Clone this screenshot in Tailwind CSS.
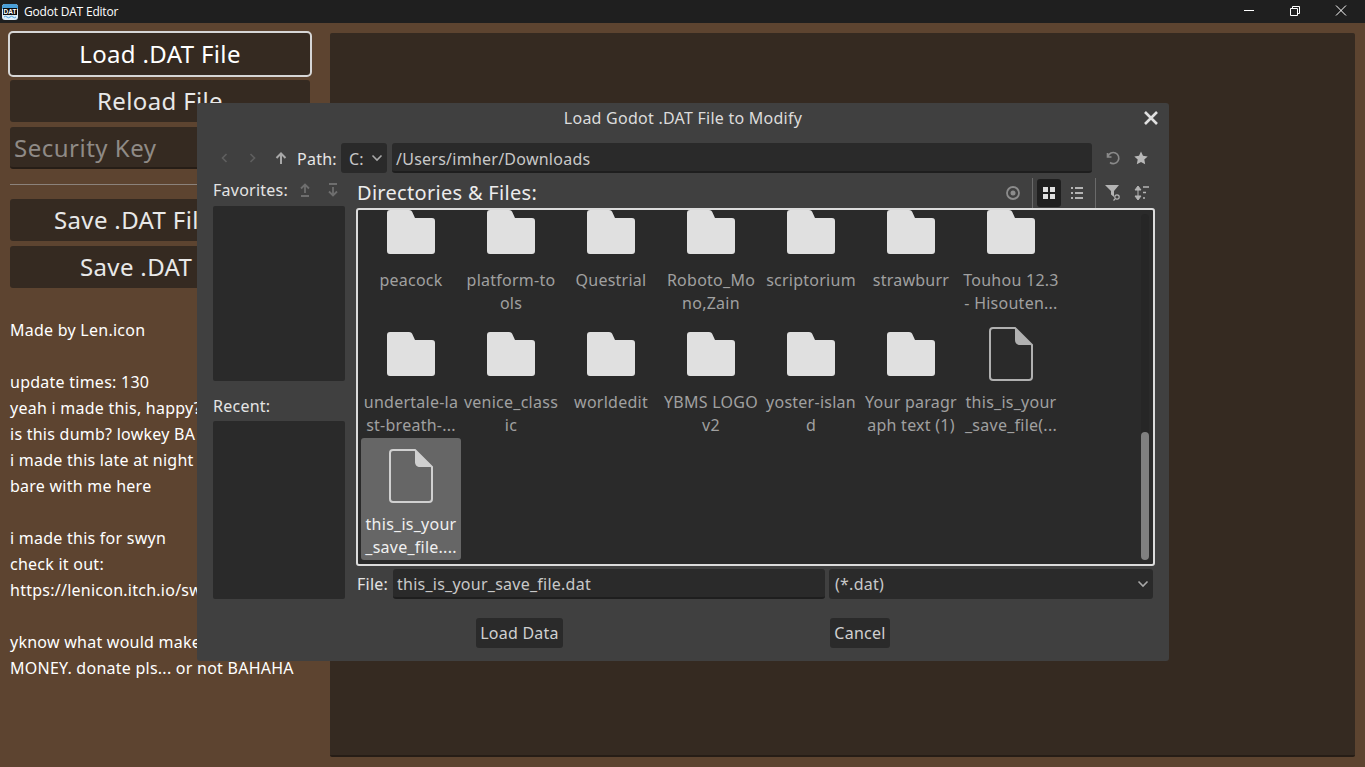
<!DOCTYPE html>
<html lang="en">
<head>
    <meta charset="UTF-8">
    <title>Godot DAT Editor</title>
    <script src="https://cdn.jsdelivr.net/npm/@tailwindcss/browser@4"></script>
</head>
<body class="bg-[#5d4430] font-['Noto_Sans',sans-serif] overflow-hidden">
<div class="relative w-[1365px] h-[767px] overflow-hidden">
    <!-- title bar -->
    <div class="h-[23px] bg-[#1f1f1f] flex items-center text-white">
        <svg class="ml-[2px] w-[16px] h-[16px]" viewBox="0 0 16 16">
            <rect x="0" y="0" width="16" height="16" rx="3" fill="#dcecf7"/>
            <path d="M2 0h12l2 2v3H0V2z" fill="#4a9fd8"/>
            <rect x="1" y="4" width="14" height="7" fill="#0b0b0b"/>
            <path d="M2 13q1.500-1.500 3 0t3 0 3 0 3 0" stroke="#4a9fd8" fill="none"/>
            <text x="8" y="10" font-size="6.5" font-weight="700" text-anchor="middle" fill="#fff" font-family="Liberation Sans">DAT</text>
        </svg>
        <span class="ml-[6px] text-[12px] tracking-[-0.2px] font-['Open_Sans',sans-serif]">Godot DAT Editor</span>
        <div class="ml-auto flex items-center pr-[1px]">
            <svg class="w-[46px] h-[23px]" viewBox="0 0 46 23"><path d="M18 10.500h10" stroke="#fff" fill="none"/></svg>
            <svg class="w-[46px] h-[23px]" viewBox="0 0 46 23"><path d="M18.500 8.500h7v7h-7zM20.500 8.500v-2h7v7h-2" stroke="#fff" fill="none"/></svg>
            <svg class="w-[46px] h-[23px]" viewBox="0 0 46 23"><path d="M18 5.500l10 10M28 5.500l-10 10" stroke="#fff" fill="none"/></svg>
        </div>
    </div>

    <!-- main -->
    <div class="flex pt-[10px] pl-[10px] pr-[10px] gap-[20px] h-[734px]">
        <div class="w-[300px] flex flex-col text-[#e8e8e8]">
            <div class="h-[42px] rounded-[3px] bg-[#352a21] text-white text-[24px] tracking-[0.35px] flex items-center justify-center outline-2 outline-[#d6d6d6]">Load .DAT File</div>
            <div class="h-[42px] mt-[5px] rounded-[3px] bg-[#352a21] text-[24px] tracking-[0.35px] flex items-center justify-center">Reload File</div>
            <div class="h-[42px] mt-[5px] rounded-[3px] bg-[#352a21] border-b-2 border-[#261d16] text-[24px] tracking-[0.5px] text-[#8f8a86] flex items-center pl-[4px] pt-[2px]">Security Key</div>
            <div class="h-px bg-[#8b827b] mt-[15px]"></div>
            <div class="h-[42px] mt-[14px] rounded-[3px] bg-[#352a21] text-[24px] tracking-[0.35px] flex items-center pl-[44px]">Save .DAT File</div>
            <div class="h-[42px] mt-[5px] rounded-[3px] bg-[#352a21] text-[24px] tracking-[0.35px] flex items-center pl-[70px]">Save .DAT</div>
            <div class="mt-[29px] text-[16px] leading-[26px] tracking-[0.25px] text-white whitespace-nowrap">
                <p>Made by Len.icon</p>
                <p class="h-[26px]"></p>
                <p>update times: 130</p>
                <p>yeah i made this, happy?</p>
                <p>is this dumb? lowkey BA</p>
                <p>i made this late at night</p>
                <p>bare with me here</p>
                <p class="h-[26px]"></p>
                <p>i made this for swyn</p>
                <p>check it out:</p>
                <p>https://lenicon.itch.io/swyn</p>
                <p class="h-[26px]"></p>
                <p>yknow what would make</p>
                <p>MONEY. donate pls... or not BAHAHA</p>
            </div>
        </div>
        <div class="flex-1 h-[724px] rounded-[2px] bg-[#352a21] border-b-2 border-[#261d16]"></div>
    </div>

    <!-- file dialog -->
    <div class="absolute left-[197px] top-[103px] w-[972px] h-[558px] rounded-[3px] bg-[#404040] flex flex-col pt-[3px] px-[16px] text-[#e4e4e4] text-[16px] tracking-[0.25px]">
        <div class="relative h-[24px] flex items-center justify-center text-[#dcdcdc]">
            Load Godot .DAT File to Modify
            <svg class="absolute right-[-6px] top-[4px] w-[16px] h-[16px]" viewBox="0 0 16 16"><path d="M2 2l12 12M14 2L2 14" stroke="#e0e0e0" stroke-width="2.600" fill="none"/></svg>
        </div>
        <!-- path row -->
        <div class="mt-[13px] h-[30px] flex items-center">
            <svg class="w-[22px] h-[16px]" viewBox="0 0 22 16"><path d="M13.500 4l-4 4 4 4" stroke="#5f5f5f" stroke-width="1.600" fill="none"/></svg>
            <svg class="ml-[6px] w-[22px] h-[16px]" viewBox="0 0 22 16"><path d="M9.500 4l4 4-4 4" stroke="#5f5f5f" stroke-width="1.600" fill="none"/></svg>
            <svg class="ml-[10px] w-[16px] h-[16px]" viewBox="0 0 16 16"><path d="M8 14V4M3.500 8L8 3.500 12.500 8" stroke="#a8a8a8" stroke-width="2" fill="none"/></svg>
            <span class="ml-[8px] w-[40px] pt-[1px] text-[#e6e6e6]">Path:</span>
            <div class="ml-[4px] w-[46px] h-[30px] rounded-[3px] bg-[#2a2a2a] flex items-center pl-[8px] pt-[2px] text-[#c8c8c8]">C:
                <svg class="ml-[7px] -mt-[2px] w-[12px] h-[12px]" viewBox="0 0 12 12"><path d="M1.500 3.500L6 8l4.500-4.500" stroke="#a8a8a8" stroke-width="1.600" fill="none"/></svg>
            </div>
            <div class="ml-[5px] w-[700px] h-[30px] rounded-[3px] bg-[#2a2a2a] border-b-2 border-[#1e1e1e] flex items-center pl-[4px] pt-[4px] text-[#c8c8c8]">/Users/imher/Downloads</div>
            <svg class="ml-[13px] w-[16px] h-[16px]" viewBox="0 0 16 16"><path d="M5 12.500A5.500 5.500 0 1 0 3 6.500M2.500 3v4h4" stroke="#8a8a8a" stroke-width="1.600" fill="none"/></svg>
            <svg class="ml-[12px] w-[16px] h-[16px]" viewBox="0 0 16 16"><path d="M8 1.500l2 4.300 4.700.6-3.400 3.200.9 4.700L8 12l-4.200 2.300.9-4.700L1.300 6.400 6 5.800z" fill="#b8b8b8"/></svg>
        </div>
        <!-- body -->
        <div class="mt-[4px] flex gap-[12px]">
            <div class="w-[132px] shrink-0 flex flex-col">
                <div class="h-[29px] pb-[3px] flex items-center">
                    <span class="w-[76px] whitespace-nowrap">Favorites:</span>
                    <svg class="ml-[8px] w-[16px] h-[16px]" viewBox="0 0 16 16"><path d="M8 11V3M4 6.500L8 2.500l4 4M4 14h8" stroke="#6e6e6e" stroke-width="1.800" fill="none"/></svg>
                    <svg class="ml-[12px] w-[16px] h-[16px]" viewBox="0 0 16 16"><path d="M8 5v8M4 9.500l4 4 4-4M4 2h8" stroke="#6e6e6e" stroke-width="1.800" fill="none"/></svg>
                </div>
                <div class="h-[175px] rounded-[2px] bg-[#2a2a2a]"></div>
                <div class="h-[40px] flex items-center pt-[10px]">Recent:</div>
                <div class="h-[178px] rounded-[2px] bg-[#2a2a2a]"></div>
            </div>
            <div class="w-[797px] shrink-0 flex flex-col">
                <div class="h-[31px] flex items-center">
                    <span class="text-[20px] tracking-[0.3px] text-[#ececec]">Directories &amp; Files:</span>
                    <div class="ml-auto flex items-center h-[30px] pr-[5px]">
                        <svg class="w-[16px] h-[16px]" viewBox="0 0 16 16"><circle cx="8" cy="8" r="6" stroke="#8c8c8c" stroke-width="1.800" fill="none"/><circle cx="8" cy="8" r="2.500" fill="#8c8c8c"/></svg>
                        <div class="ml-[11px] w-px h-[30px] bg-[#6a6a6a]"></div>
                        <div class="ml-[4px] w-[24px] h-[28px] rounded-[3px] bg-[#1f1f1f] flex items-center justify-center">
                            <svg class="w-[12px] h-[12px]" viewBox="0 0 12 12"><path d="M0 0h5v5H0zM7 0h5v5H7zM0 7h5v5H0zM7 7h5v5H7z" fill="#e0e0e0"/></svg>
                        </div>
                        <svg class="ml-[9px] w-[14px] h-[14px]" viewBox="0 0 14 14"><path d="M1 1h2v2H1zM5 1h8v2H5zM1 6h2v2H1zM5 6h8v2H5zM1 11h2v2H1zM5 11h8v2H5z" fill="#b4b4b4"/></svg>
                        <div class="ml-[11px] w-px h-[30px] bg-[#6a6a6a]"></div>
                        <svg class="ml-[9px] w-[16px] h-[16px]" viewBox="0 0 16 16"><path d="M0 0h14L9 6v6L6 9.500V6z" fill="#b4b4b4"/><circle cx="12" cy="12" r="2.200" stroke="#b4b4b4" stroke-width="1.200" fill="#404040"/><path d="M10 14l-1.500 1.500" stroke="#b4b4b4" stroke-width="1.200"/></svg>
                        <svg class="ml-[12px] w-[16px] h-[16px]" viewBox="0 0 16 16"><path d="M5 2v12M2 5l3-4 3 4zM2 11l3 4 3-4z" fill="#b4b4b4" stroke="#b4b4b4"/><path d="M10 2h6M10 7.500h3M10 13h2" stroke="#b4b4b4" stroke-width="1.500"/></svg>
                    </div>
                </div>
                <div class="relative -ml-[1px] w-[799px] h-[358px] rounded-[3px] bg-[#2a2a2a] border-2 border-[#dcdcdc] overflow-hidden">
                    <div id="grid" class="-mt-[16px] ml-[3px] grid grid-cols-[repeat(7,100px)] auto-rows-[122px] leading-[23px] text-center text-[#a0a0a0]"></div>
                    <div class="absolute right-[4px] top-[4px] w-[8px] h-[346px] rounded-[4px] bg-[#262626]">
                        <div class="absolute left-0 top-[218px] w-[8px] h-[128px] rounded-[4px] bg-[#808080]"></div>
                    </div>
                </div>
                <div class="mt-[3px] h-[30px] flex items-center">
                    <span class="w-[36px]">File:</span>
                    <div class="w-[432px] h-[30px] rounded-[3px] bg-[#2a2a2a] border-b-2 border-[#1e1e1e] flex items-center pl-[4px] pt-[2px] text-[#c8c8c8]">this_is_your_save_file.dat</div>
                    <div class="ml-[4px] w-[324px] h-[30px] rounded-[3px] bg-[#2a2a2a] flex items-center pl-[6px] text-[#c8c8c8]">(*.dat)
                        <svg class="ml-auto mr-[4px] w-[12px] h-[12px]" viewBox="0 0 12 12"><path d="M1.500 3.500L6 8l4.500-4.500" stroke="#a8a8a8" stroke-width="1.600" fill="none"/></svg>
                    </div>
                </div>
            </div>
        </div>
        <div class="absolute left-[279px] top-[515px] w-[87px] h-[30px] rounded-[3px] bg-[#2a2a2a] flex items-center justify-center text-[#d0d0d0]">Load Data</div>
        <div class="absolute left-[633px] top-[515px] w-[60px] h-[30px] rounded-[3px] bg-[#2a2a2a] flex items-center justify-center text-[#d0d0d0]">Cancel</div>
    </div>
</div>

<script>
    const folder = '<svg class="w-[48px] h-[44px]" viewBox="0 0 48 44"><path d="M3 0h19c2 0 3 1 3.500 2.500L28 8h17c2 0 3 1 3 3v30c0 2-1 3-3 3H3c-2 0-3-1-3-3V3c0-2 1-3 3-3z" fill="#e0e0e0"/></svg>';
    const file = (color) => '<svg class="w-[44px] h-[54px]" viewBox="0 0 44 54"><path d="M4 1h22l17 17v32c0 2-1 3-3 3H4c-2 0-3-1-3-3V4c0-2 1-3 3-3z" fill="none" stroke="' + color + '" stroke-width="2"/><path d="M26 1v12c0 3 2 5 5 5h12z" fill="' + color + '"/></svg>';
    const items = [
        ['peacock', ''], ['platform-to', 'ols'], ['Questrial', ''], ['Roboto_Mo', 'no,Zain'], ['scriptorium', ''], ['strawburr', ''], ['Touhou 12.3', '- Hisouten...'],
        ['undertale-la', 'st-breath-...'], ['venice_class', 'ic'], ['worldedit', ''], ['YBMS LOGO', 'v2'], ['yoster-islan', 'd'], ['Your paragr', 'aph text (1)'], ['this_is_your', '_save_file(...', 'file'],
        ['this_is_your', '_save_file....', 'sel']
    ];
    document.getElementById('grid').innerHTML = items.map(([a, b, kind]) => {
        const sel = kind === 'sel';
        const icon = kind ? file(sel ? '#d0d0d0' : '#b0b0b0') : folder;
        return '<div class="flex flex-col items-center rounded-[3px] whitespace-nowrap ' + (sel ? 'bg-[#666666] text-[#f0f0f0]' : '') + '">' +
            '<div class="h-[76px] flex items-center justify-center">' + icon + '</div>' +
            '<div class="-mt-[1px]">' + a + '</div><div class="h-[23px]">' + b + '</div></div>';
    }).join('');
</script>
</body>
</html>
